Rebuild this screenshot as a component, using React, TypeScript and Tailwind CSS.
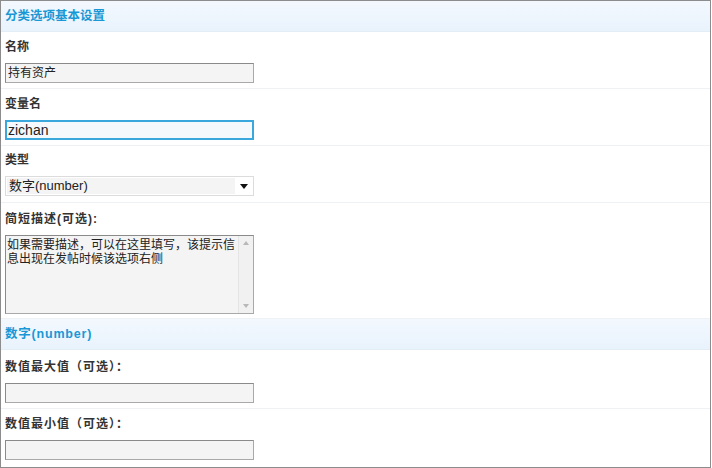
import React from "react";

const font = {
  fontFamily: '"Liberation Sans", "Noto Sans CJK SC", sans-serif',
};

// Section heading band (light blue)
const SectionTitle = ({
  children,
  className = "",
}: {
  children: React.ReactNode;
  className?: string;
}) => (
  <div
    className={`h-[31px] flex items-center px-[4px] bg-gradient-to-b from-[#f3f8fe] to-[#e9f3fc] border-b border-[#e3edf6] text-[12.5px] font-bold text-[#1a98d5] ${className}`}
  >
    {children}
  </div>
);

const Row = ({
  label,
  children,
  className = "pt-[7px] pb-[5px]",
  labelClass = "",
  last = false,
}: {
  label: string;
  children: React.ReactNode;
  className?: string;
  labelClass?: string;
  last?: boolean;
}) => (
  <div
    className={`px-[4px] ${className} ${last ? "" : "border-b border-[#eef2f5]"}`}
  >
    <div
      className={`h-[16px] leading-[16px] text-[12px] font-bold text-[#333] ${labelClass}`}
    >
      {label}
    </div>
    <div className="mt-[8px]">{children}</div>
  </div>
);

const TextBox = ({ value = "" }: { value?: string }) => (
  <div className="w-[249px] h-[20px] border border-[#a9a9a9] border-t-[#8a8a8a] border-l-[#8a8a8a] bg-[#f4f4f4] px-[2px] leading-[18px] text-[12px] text-[#222]">
    {value}
  </div>
);

export default function App() {
  return (
    <div className="w-[712px] h-[468px] bg-white" style={font}>
      <div className="w-[711px] h-[468px] border border-[#8c8c8c] bg-white overflow-hidden">
        <SectionTitle>分类选项基本设置</SectionTitle>

        <Row label="名称">
          <TextBox value="持有资产" />
        </Row>

        <Row label="变量名">
          <div className="w-[249px] h-[20px] border-2 border-[#3aa8dc] bg-[#f5f9fc] px-[1px] leading-[16px] text-[14px] text-[#222]">
            zichan
          </div>
        </Row>

        <Row label="类型" className="pt-[6px] pb-[6px]">
          <div className="w-[249px] h-[20px] border border-[#dcdcdc] bg-white flex items-center">
            <div className="w-[228px] h-[16px] ml-[1px] bg-[#f4f4f4] px-[2px] leading-[16px] text-[13px] text-[#222]">
              数字(number)
            </div>
            <div className="flex-1 flex justify-center">
              <svg width="8" height="5" viewBox="0 0 8 5">
                <path d="M0 0h8L4 5z" fill="#111" />
              </svg>
            </div>
          </div>
        </Row>

        <Row
          label="简短描述(可选):"
          className="pt-[8px] pb-[4px]"
          labelClass="tracking-[1px]"
        >
          <div className="w-[249px] h-[79px] border border-[#a9a9a9] border-t-[#8a8a8a] border-l-[#8a8a8a] bg-[#f4f4f4] flex">
            <div className="flex-1 pl-[1px] pt-[2px] text-[12px] leading-[14px] text-[#222]">
              如果需要描述，可以在这里填写，该提示信息出现在发帖时候该选项右侧
            </div>
            <div className="w-[15px] border-l border-[#e4e4e4] bg-[#f1f1f1] flex flex-col justify-between items-center py-[5px]">
              <svg width="6" height="4" viewBox="0 0 6 4">
                <path d="M0 4L3 0l3 4z" fill="#b8b8b8" />
              </svg>
              <svg width="6" height="4" viewBox="0 0 6 4">
                <path d="M0 0h6L3 4z" fill="#b8b8b8" />
              </svg>
            </div>
          </div>
        </Row>

        <SectionTitle className="tracking-[0.8px]">数字(number)</SectionTitle>

        <Row
          label="数值最大值（可选）："
          className="pt-[9px] pb-[5px]"
          labelClass="tracking-[1px]"
        >
          <TextBox />
        </Row>

        <Row
          label="数值最小值（可选）："
          className="pt-[7px] pb-[5px]"
          labelClass="tracking-[1px]"
          last
        >
          <TextBox />
        </Row>
      </div>
    </div>
  );
}
